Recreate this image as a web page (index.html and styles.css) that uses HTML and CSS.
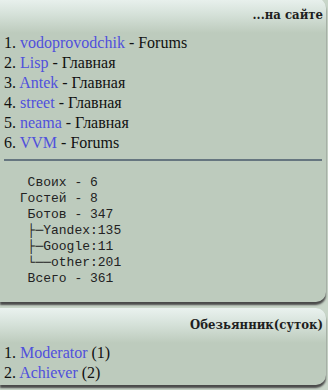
FILE: index.html
```html
<!DOCTYPE html>
<html lang="ru">
<head>
    <meta charset="UTF-8">
    <title>На сайте</title>
    <link rel="stylesheet" href="styles.css">
</head>
<body>

<div class="block block-first">
    <div class="block-head">...на сайте</div>
    <div class="block-body">
        <ol class="list">
            <li><a href="#">vodoprovodchik</a> - Forums</li>
            <li><a href="#">Lisp</a> - Главная</li>
            <li><a href="#">Antek</a> - Главная</li>
            <li><a href="#">street</a> - Главная</li>
            <li><a href="#">neama</a> - Главная</li>
            <li><a href="#">VVM</a> - Forums</li>
        </ol>
        <hr class="divider">
<pre class="stats">  Своих - 6
 Гостей - 8
  Ботов - 347
  ├─Yandex:135
  ├─Google:11
  └──other:201
  Всего - 361</pre>
    </div>
</div>

<div class="block">
    <div class="block-head">Обезьянник(суток)</div>
    <div class="block-body">
        <ol class="list">
            <li><a href="#">Moderator</a> (1)</li>
            <li><a href="#">Achiever</a> (2)</li>
        </ol>
    </div>
</div>

</body>
</html>
```

FILE: styles.css
```css
body {
    margin: 0;
    padding: 0;
    background-color: #c9d6c9;
    font-family: "Liberation Serif", "Times New Roman", serif;
    color: #111;
}

.block {
    width: 326px;
    background-color: #bdcbbd;
    border-radius: 0 10px 10px 0;
    box-shadow: 0 3px 2px #4a4a4a;
    margin-bottom: 6px;
}

.block-first {
    margin-top: -2px;
}

.block-head {
    height: 35px;
    box-sizing: border-box;
    padding: 9px 3px 0 0;
    text-align: right;
    font-family: "DejaVu Serif Condensed", "DejaVu Serif", Georgia, serif;
    font-stretch: condensed;
    font-weight: bold;
    font-size: 13px;
    line-height: 16px;
    color: #1e1e1e;
    border-radius: 0 10px 0 0;
    background: linear-gradient(#eaf2ef, #d6e2da 45%, #bdcbbd);
}

.block-body {
    padding: 0 4px 2px 4px;
}

.list {
    list-style: none;
    margin: 0;
    padding: 0;
    font-size: 16px;
    line-height: 20px;
    counter-reset: item;
}

.list li {
    counter-increment: item;
}

.list li::before {
    content: counter(item) ". ";
}

.list a {
    color: #5050dc;
    text-decoration: none;
}

.divider {
    border: none;
    height: 2px;
    background-color: #667680;
    margin: 6px 0 0 0;
}

.stats {
    margin: 14px 0 0 8px;
    padding-bottom: 13px;
    font-family: "Liberation Mono", "Courier New", monospace;
    font-size: 13px;
    line-height: 16px;
    color: #222;
}
```
